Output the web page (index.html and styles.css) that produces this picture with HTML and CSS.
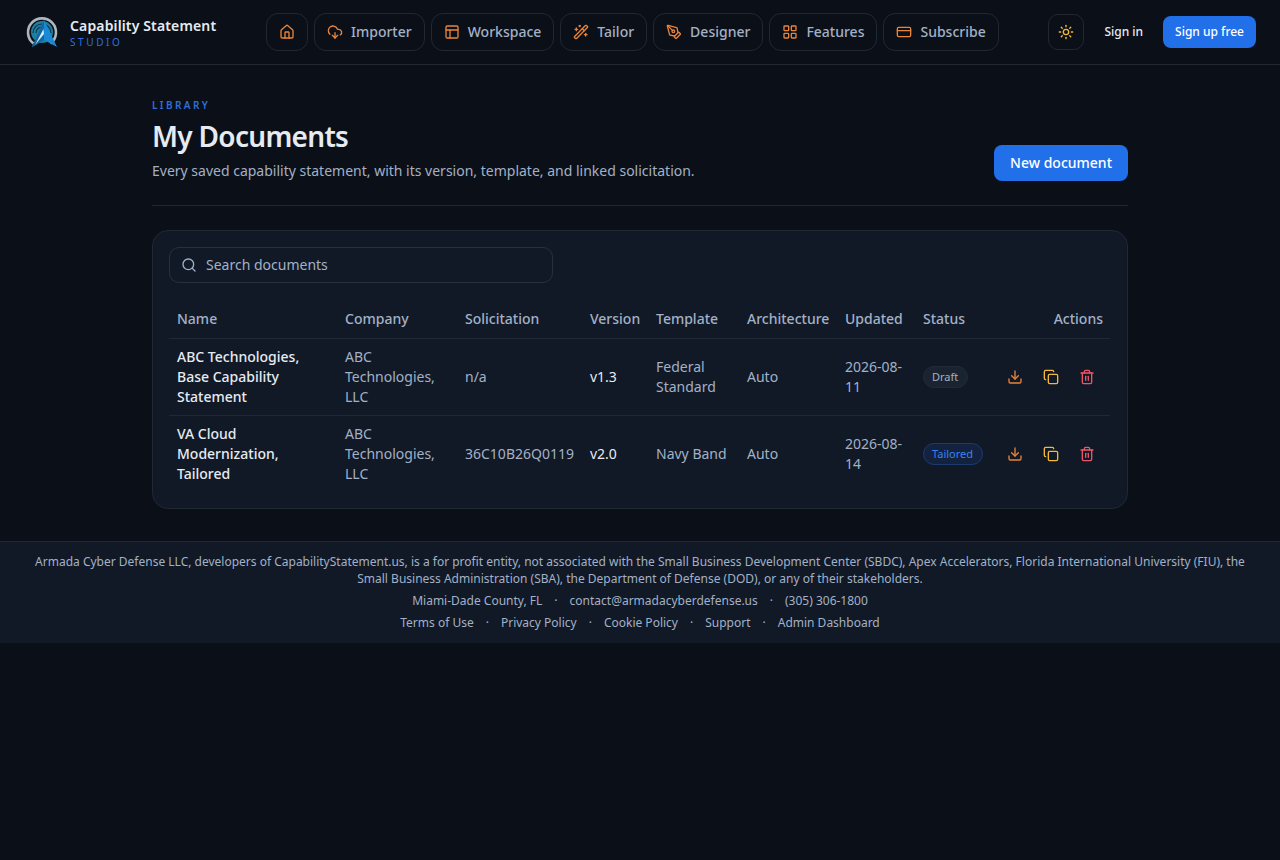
FILE: index.html
```html
<!DOCTYPE html>
<html lang="en">

<head>
    <meta charset="UTF-8">
    <meta name="viewport" content="width=device-width, initial-scale=1.0">
    <title>My Documents</title>
    <link rel="stylesheet" href="styles.css">
</head>

<body>
    <header class="topbar">
        <a class="brand" href="#">
            <svg class="brand__logo" viewBox="0 0 32 32" fill="none">
                <path d="M7.5 27.5A14 14 0 1 1 24.5 27.5" stroke="#aeb7bf" stroke-width="2.6" />
                <circle cx="16" cy="16" r="11" fill="#1f7f9f" />
                <path d="M7 17a9 9 0 0 1 18 0M10 17a6 6 0 0 1 12 0" stroke="#0c3348" stroke-width="1.1" />
                <path d="M18 4L31 31 18 24 6 31z" fill="#1a8ad6" />
                <path d="M18 4L18 24 6 31z" fill="#14669f" />
                <path d="M17.5 13L18 18 9 29z" fill="#cfeefc" />
            </svg>
            <span class="brand__text">
                <span class="brand__name">Capability Statement</span>
                <span class="brand__sub">STUDIO</span>
            </span>
        </a>

        <nav class="nav">
            <a class="nav__item" href="#" aria-label="Home">
                <svg class="icon" viewBox="0 0 24 24"><path d="M15 21v-8a1 1 0 0 0-1-1h-4a1 1 0 0 0-1 1v8"/><path d="M3 10a2 2 0 0 1 .709-1.528l7-5.999a2 2 0 0 1 2.582 0l7 5.999A2 2 0 0 1 21 10v9a2 2 0 0 1-2 2H5a2 2 0 0 1-2-2z"/></svg>
            </a>
            <a class="nav__item" href="#">
                <svg class="icon" viewBox="0 0 24 24"><path d="M12 13v8l-4-4"/><path d="m12 21 4-4"/><path d="M4.393 15.269A7 7 0 1 1 15.71 8h1.79a4.5 4.5 0 0 1 2.436 8.284"/></svg>
                Importer
            </a>
            <a class="nav__item" href="#">
                <svg class="icon" viewBox="0 0 24 24"><rect width="18" height="18" x="3" y="3" rx="2"/><path d="M3 9h18"/><path d="M9 21V9"/></svg>
                Workspace
            </a>
            <a class="nav__item" href="#">
                <svg class="icon" viewBox="0 0 24 24"><path d="m21.64 3.64-1.28-1.28a1.21 1.21 0 0 0-1.72 0L2.36 18.64a1.21 1.21 0 0 0 0 1.72l1.28 1.28a1.2 1.2 0 0 0 1.72 0L21.64 5.36a1.2 1.2 0 0 0 0-1.72"/><path d="m14 7 3 3"/><path d="M5 6v4"/><path d="M19 14v4"/><path d="M10 2v2"/><path d="M7 8H3"/><path d="M21 16h-4"/><path d="M11 3H9"/></svg>
                Tailor
            </a>
            <a class="nav__item" href="#">
                <svg class="icon" viewBox="0 0 24 24"><path d="M15.707 21.293a1 1 0 0 1-1.414 0l-1.586-1.586a1 1 0 0 1 0-1.414l5.586-5.586a1 1 0 0 1 1.414 0l1.586 1.586a1 1 0 0 1 0 1.414z"/><path d="m18 13-1.375-6.874a1 1 0 0 0-.746-.776L3.235 2.028a1 1 0 0 0-1.207 1.207L5.35 15.879a1 1 0 0 0 .776.746L13 18"/><path d="m2.3 2.3 7.286 7.286"/><circle cx="11" cy="11" r="2"/></svg>
                Designer
            </a>
            <a class="nav__item" href="#">
                <svg class="icon" viewBox="0 0 24 24"><rect width="7" height="7" x="3" y="3" rx="1"/><rect width="7" height="7" x="14" y="3" rx="1"/><rect width="7" height="7" x="14" y="14" rx="1"/><rect width="7" height="7" x="3" y="14" rx="1"/></svg>
                Features
            </a>
            <a class="nav__item" href="#">
                <svg class="icon" viewBox="0 0 24 24"><rect width="20" height="14" x="2" y="5" rx="2"/><path d="M2 10h20"/></svg>
                Subscribe
            </a>
        </nav>

        <div class="topbar__right">
            <button class="theme-btn" aria-label="Theme">
                <svg class="icon icon--yellow" viewBox="0 0 24 24"><circle cx="12" cy="12" r="4"/><path d="M12 2v2"/><path d="M12 20v2"/><path d="m4.93 4.93 1.41 1.41"/><path d="m17.66 17.66 1.41 1.41"/><path d="M2 12h2"/><path d="M20 12h2"/><path d="m6.34 17.66-1.41 1.41"/><path d="m19.07 4.93-1.41 1.41"/></svg>
            </button>
            <a class="signin" href="#">Sign in</a>
            <a class="signup" href="#">Sign up free</a>
        </div>
    </header>

    <main class="page">
        <section class="page__head">
            <div>
                <p class="eyebrow">LIBRARY</p>
                <h1 class="page__title">My Documents</h1>
                <p class="page__desc">Every saved capability statement, with its version, template, and linked solicitation.</p>
            </div>
            <a class="btn-primary" href="#">New document</a>
        </section>

        <section class="card">
            <label class="search">
                <svg class="icon icon--muted" viewBox="0 0 24 24"><path d="m21 21-4.34-4.34"/><circle cx="11" cy="11" r="8"/></svg>
                <input class="search__input" type="text" placeholder="Search documents">
            </label>

            <table class="docs">
                <thead>
                    <tr>
                        <th class="col-name">Name</th>
                        <th class="col-company">Company</th>
                        <th class="col-solicitation">Solicitation</th>
                        <th class="col-version">Version</th>
                        <th class="col-template">Template</th>
                        <th class="col-arch">Architecture</th>
                        <th class="col-updated">Updated</th>
                        <th class="col-status">Status</th>
                        <th class="col-actions">Actions</th>
                    </tr>
                </thead>
                <tbody>
                    <tr>
                        <td class="doc-name">ABC Technologies, Base Capability Statement</td>
                        <td>ABC Technologies, LLC</td>
                        <td>n/a</td>
                        <td class="doc-version">v1.3</td>
                        <td>Federal Standard</td>
                        <td>Auto</td>
                        <td>2026-08-11</td>
                        <td><span class="badge">Draft</span></td>
                        <td>
                            <div class="actions">
                                <button class="action" aria-label="Download"><svg class="icon" viewBox="0 0 24 24"><path d="M12 15V3"/><path d="M21 15v4a2 2 0 0 1-2 2H5a2 2 0 0 1-2-2v-4"/><path d="m7 10 5 5 5-5"/></svg></button>
                                <button class="action" aria-label="Duplicate"><svg class="icon icon--yellow" viewBox="0 0 24 24"><rect width="14" height="14" x="8" y="8" rx="2" ry="2"/><path d="M4 16c-1.1 0-2-.9-2-2V4c0-1.1.9-2 2-2h10c1.1 0 2 .9 2 2"/></svg></button>
                                <button class="action" aria-label="Delete"><svg class="icon icon--red" viewBox="0 0 24 24"><path d="M3 6h18"/><path d="M19 6v14c0 1-1 2-2 2H7c-1 0-2-1-2-2V6"/><path d="M8 6V4c0-1 1-2 2-2h4c1 0 2 1 2 2v2"/><path d="M10 11v6"/><path d="M14 11v6"/></svg></button>
                            </div>
                        </td>
                    </tr>
                    <tr>
                        <td class="doc-name">VA Cloud Modernization, Tailored</td>
                        <td>ABC Technologies, LLC</td>
                        <td>36C10B26Q0119</td>
                        <td class="doc-version">v2.0</td>
                        <td>Navy Band</td>
                        <td>Auto</td>
                        <td>2026-08-14</td>
                        <td><span class="badge badge--blue">Tailored</span></td>
                        <td>
                            <div class="actions">
                                <button class="action" aria-label="Download"><svg class="icon" viewBox="0 0 24 24"><path d="M12 15V3"/><path d="M21 15v4a2 2 0 0 1-2 2H5a2 2 0 0 1-2-2v-4"/><path d="m7 10 5 5 5-5"/></svg></button>
                                <button class="action" aria-label="Duplicate"><svg class="icon icon--yellow" viewBox="0 0 24 24"><rect width="14" height="14" x="8" y="8" rx="2" ry="2"/><path d="M4 16c-1.1 0-2-.9-2-2V4c0-1.1.9-2 2-2h10c1.1 0 2 .9 2 2"/></svg></button>
                                <button class="action" aria-label="Delete"><svg class="icon icon--red" viewBox="0 0 24 24"><path d="M3 6h18"/><path d="M19 6v14c0 1-1 2-2 2H7c-1 0-2-1-2-2V6"/><path d="M8 6V4c0-1 1-2 2-2h4c1 0 2 1 2 2v2"/><path d="M10 11v6"/><path d="M14 11v6"/></svg></button>
                            </div>
                        </td>
                    </tr>
                </tbody>
            </table>
        </section>
    </main>

    <footer class="footer">
        <p class="footer__legal">Armada Cyber Defense LLC, developers of CapabilityStatement.us, is a for profit entity, not associated with the Small Business Development Center (SBDC), Apex Accelerators, Florida International University (FIU), the Small Business Administration (SBA), the Department of Defense (DOD), or any of their stakeholders.</p>
        <p class="footer__line">
            <span>Miami-Dade County, FL</span>
            <span>·</span>
            <a href="#">contact@armadacyberdefense.us</a>
            <span>·</span>
            <a href="#">(305) 306-1800</a>
        </p>
        <p class="footer__line">
            <a href="#">Terms of Use</a>
            <span>·</span>
            <a href="#">Privacy Policy</a>
            <span>·</span>
            <a href="#">Cookie Policy</a>
            <span>·</span>
            <a href="#">Support</a>
            <span>·</span>
            <a href="#">Admin Dashboard</a>
        </p>
    </footer>
</body>

</html>
```

FILE: styles.css
```css
* {
    margin: 0;
    padding: 0;
    box-sizing: border-box;
}

body {
    min-height: 100vh;
    background-color: #0b1018;
    color: #e6ebf2;
    font-family: "Noto Sans", sans-serif;
    font-size: 14px;
}

a {
    color: inherit;
    text-decoration: none;
}

.icon {
    display: block;
    width: 16px;
    height: 16px;
    flex: none;
    fill: none;
    stroke: #e8843a;
    stroke-width: 2;
    stroke-linecap: round;
    stroke-linejoin: round;
}

.icon--yellow { stroke: #f2b93b; }
.icon--red { stroke: #ef5466; }
.icon--muted { stroke: #a3b1c6; }

/* header */
.topbar {
    display: flex;
    align-items: center;
    height: 65px;
    padding: 0 24px 0 26px;
    border-bottom: 1px solid #1f2833;
}

.brand {
    display: flex;
    align-items: center;
    gap: 12px;
    width: 240px;
}

.brand__logo {
    width: 32px;
    height: 32px;
}

.brand__text {
    display: flex;
    flex-direction: column;
}

.brand__name {
    font-size: 14px;
    font-weight: 600;
    line-height: 18px;
    letter-spacing: 0.01em;
    color: #e6ebf2;
}

.brand__sub {
    margin-top: 1px;
    font-size: 10px;
    line-height: 12px;
    letter-spacing: 0.26em;
    color: #2f6fdb;
}

.nav {
    display: flex;
    gap: 6px;
}

.nav__item {
    display: flex;
    align-items: center;
    gap: 8px;
    height: 38px;
    padding: 0 12px 1px;
    border: 1px solid #1f2833;
    border-radius: 12px;
    color: #a3b1c6;
    font-weight: 500;
}

.topbar__right {
    display: flex;
    align-items: center;
    margin-left: auto;
}

.theme-btn {
    display: flex;
    align-items: center;
    justify-content: center;
    width: 36px;
    height: 36px;
    background: none;
    border: 1px solid #1f2833;
    border-radius: 10px;
}

.signin {
    margin: 0 20px;
    padding-bottom: 1px;
    font-size: 12px;
    font-weight: 500;
    color: #e6ebf2;
}

.signup {
    display: flex;
    align-items: center;
    height: 32px;
    padding: 0 12px 1px;
    border-radius: 8px;
    background-color: #2170ea;
    color: #fff;
    font-size: 12px;
    font-weight: 500;
}

/* page */
.page {
    width: 976px;
    margin: 0 auto;
    padding-top: 32px;
}

.page__head {
    display: flex;
    align-items: flex-end;
    justify-content: space-between;
    padding-bottom: 24px;
    border-bottom: 1px solid #1f2833;
}

.eyebrow {
    font-size: 10px;
    font-weight: 600;
    line-height: 16px;
    letter-spacing: 0.24em;
    color: #2f6fdb;
}

.page__title {
    margin-top: 5px;
    font-size: 28px;
    font-weight: 600;
    line-height: 36px;
    letter-spacing: -0.025em;
    color: #e6ebf2;
}

.page__desc {
    margin-top: 7px;
    line-height: 20px;
    color: #a3b1c6;
}

.btn-primary {
    display: flex;
    align-items: center;
    height: 36px;
    padding: 0 16px 1px;
    border-radius: 8px;
    background-color: #2170ea;
    color: #fff;
    font-weight: 500;
}

.card {
    margin-top: 24px;
    padding: 16px;
    border: 1px solid #1f2833;
    border-radius: 16px;
    background-color: #111926;
}

.search {
    display: flex;
    align-items: center;
    gap: 9px;
    width: 384px;
    height: 36px;
    padding: 0 11px;
    border: 1px solid #263140;
    border-radius: 10px;
}

.search__input {
    flex: 1;
    padding-bottom: 1px;
    background: none;
    border: 0;
    outline: 0;
    color: #e6ebf2;
    font: inherit;
}

.search__input::placeholder {
    color: #a3b1c6;
    opacity: 1;
}

/* table */
.docs {
    width: 941px;
    margin-top: 16px;
    border-collapse: collapse;
    table-layout: fixed;
    line-height: 20px;
    color: #a3b1c6;
}

.docs th {
    height: 39px;
    padding: 2px 8px 0;
    font-weight: 500;
    text-align: left;
}

.docs td {
    padding: 8px;
    border-top: 1px solid #1f2833;
}

.col-name { width: 168px; }
.col-company { width: 120px; }
.col-solicitation { width: 125px; }
.col-version { width: 66px; }
.col-template { width: 91px; }
.col-arch { width: 98px; }
.col-updated { width: 78px; }
.col-status { width: 76px; }

.docs .col-actions {
    padding-right: 7px;
    text-align: right;
}

.docs .doc-name {
    color: #e6ebf2;
    font-weight: 500;
}

.docs .doc-version {
    color: #e6ebf2;
}

.badge {
    display: inline-block;
    padding: 0 9px 0 8px;
    border: 1px solid #1f2b3a;
    border-radius: 999px;
    background-color: #1a2431;
    font-size: 11px;
    line-height: 20px;
    white-space: nowrap;
}

.badge--blue {
    border-color: #1d3a6e;
    background-color: #13233f;
    color: #3b82f0;
}

.actions {
    display: flex;
    justify-content: flex-end;
    gap: 6px;
}

.action {
    display: flex;
    align-items: center;
    justify-content: center;
    width: 30px;
    height: 30px;
    background: none;
    border: 0;
}

/* footer */
.footer {
    margin-top: 32px;
    padding: 11px 24px 12px;
    border-top: 1px solid #1f2833;
    background-color: #111926;
    color: #a3b1c6;
    font-size: 12px;
    line-height: 17px;
    text-align: center;
}

.footer__line {
    display: flex;
    justify-content: center;
    gap: 12px;
    margin-top: 5px;
}
```
